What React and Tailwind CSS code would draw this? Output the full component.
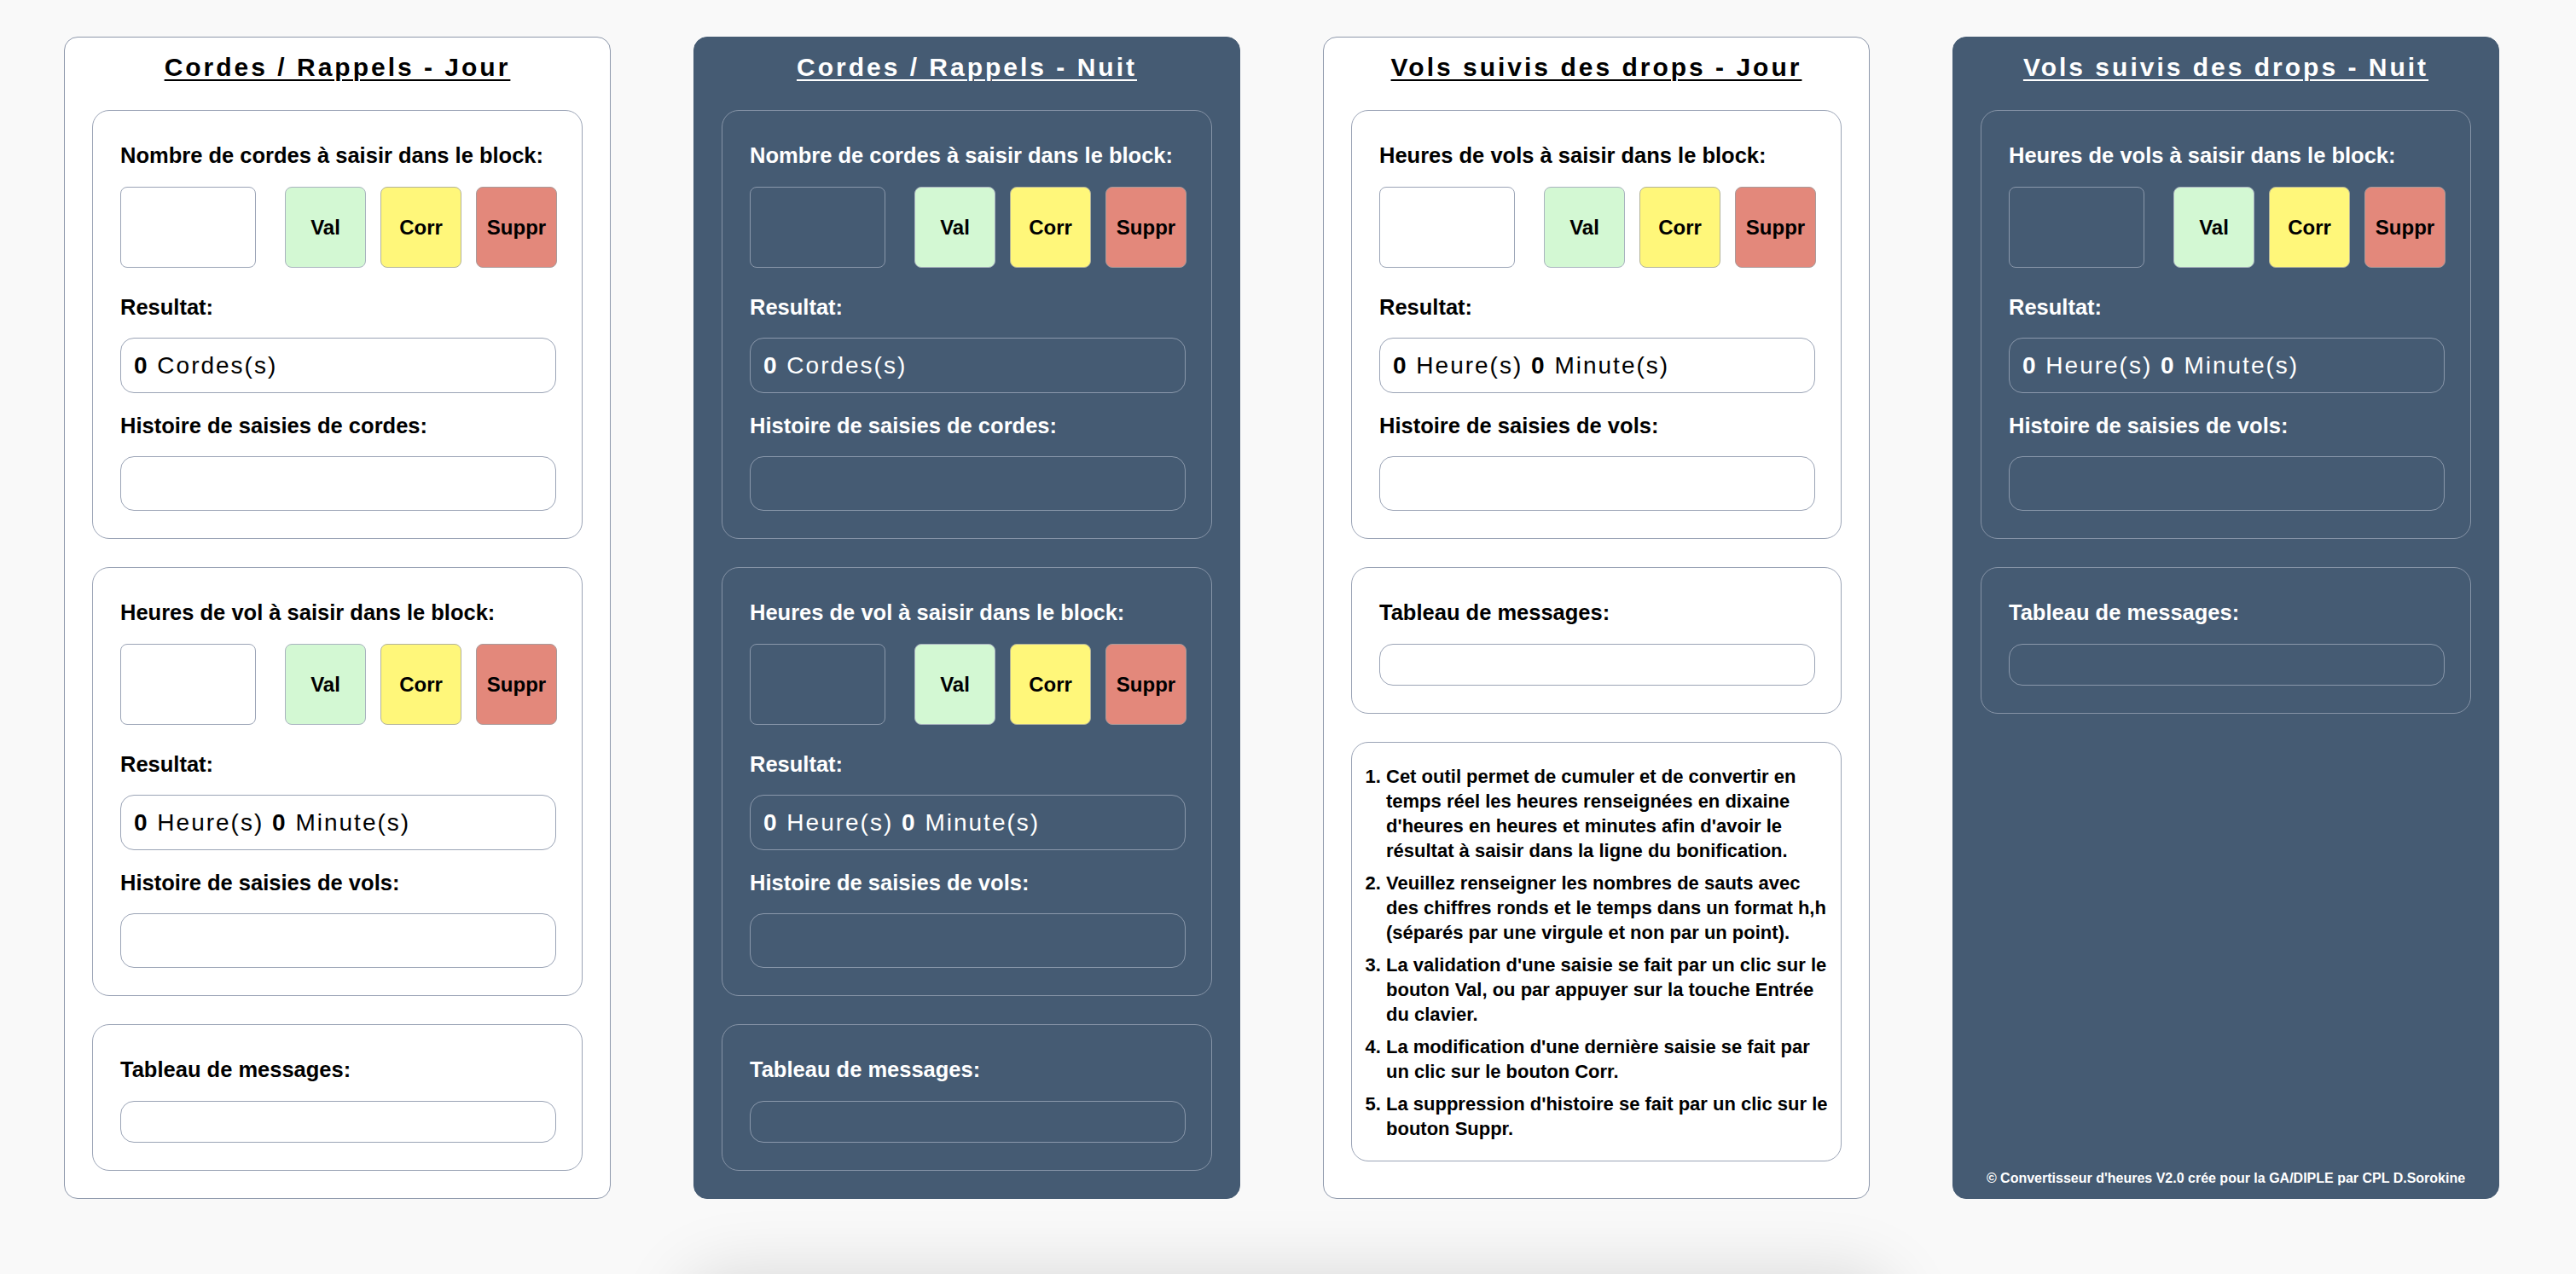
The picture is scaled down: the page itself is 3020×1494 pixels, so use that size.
import React from "react";

const C = {
  day: {
    panel: "bg-white border-[#8e98ab] text-black",
    section: "border-[#9ba4b6]",
    box: "border-[#9ba4b6] bg-white",
    title: "decoration-black",
  },
  night: {
    panel: "bg-[#455b73] border-[#455b73] text-white",
    section: "border-[#8593a6]",
    box: "border-[#8a98ab] bg-transparent",
    title: "decoration-white",
  },
};

function Label({ children, className = "" }) {
  return (
    <div className={"text-[25.5px] font-bold leading-[30px] " + className}>
      {children}
    </div>
  );
}

function Section({ t, children }) {
  return (
    <div className={"rounded-[20px] border pl-[32px] pr-[30px] pt-[37px] pb-[32px] " + t.section}>
      {children}
    </div>
  );
}

function Buttons({ t }) {
  return (
    <div className="mt-[22px] flex h-[95px]">
      <input
        type="text"
        aria-label="saisie"
        className={"mr-[34px] h-[95px] w-[159px] rounded-[8px] border outline-none " + t.box}
      />
      <div className="flex gap-[17px]">
        <button className="flex h-[95px] w-[95px] items-center justify-center rounded-[8px] border border-[#a9b3bf] bg-[#d3f8d3] text-[24px] font-bold text-black">
          Val
        </button>
        <button className="flex h-[95px] w-[95px] items-center justify-center rounded-[8px] border border-[#b3b39a] bg-[#fff77a] text-[24px] font-bold text-black">
          Corr
        </button>
        <button className="flex h-[95px] w-[95px] items-center justify-center rounded-[8px] border border-[#a99a9a] bg-[#e3887b] text-[24px] font-bold text-black">
          Suppr
        </button>
      </div>
    </div>
  );
}

function Saisie({ t, label, result, history }) {
  return (
    <Section t={t}>
      <Label>{label}</Label>
      <Buttons t={t} />
      <Label className="mt-[31px]">Resultat:</Label>
      <div
        className={
          "mt-[21px] flex h-[65px] items-center rounded-[16px] border pl-[15px] text-[28px] tracking-[2px] " +
          t.box
        }
      >
        <span>{result}</span>
      </div>
      <Label className="mt-[23px]">{history}</Label>
      <div className={"mt-[21px] h-[64px] rounded-[16px] border " + t.box}></div>
    </Section>
  );
}

function Messages({ t }) {
  return (
    <Section t={t}>
      <Label>Tableau de messages:</Label>
      <div className={"mt-[22px] h-[49px] rounded-[16px] border " + t.box}></div>
    </Section>
  );
}

function Panel({ t, title, children, pb = "pb-[32px]" }) {
  return (
    <div
      className={
        "flex w-[641px] shrink-0 flex-col gap-[33px] rounded-[16px] border px-[32px] pt-[17px] " +
        pb +
        " " +
        t.panel
      }
    >
      <h2
        className={
          "-mb-[1px] text-center text-[30px] font-bold leading-[36px] tracking-[3px] underline decoration-[2px] underline-offset-[4px] " +
          t.title
        }
      >
        {title}
      </h2>
      {children}
    </div>
  );
}

const cordes = (
  <>
    <b>0</b>{" "}Cordes(s)
  </>
);
const heures = (
  <>
    <b>0</b>{" "}Heure(s){" "}<b>0</b>{" "}Minute(s)
  </>
);

export default function App() {
  return (
    <div
      className="min-h-screen overflow-hidden bg-[#f9f9f9]"
      style={{ fontFamily: "'Liberation Sans', Arial, Helvetica, sans-serif" }}
    >
      <div className="flex items-stretch gap-[97px] pl-[75px] pt-[43px]">
        <Panel t={C.day} title="Cordes / Rappels - Jour">
          <Saisie
            t={C.day}
            label="Nombre de cordes à saisir dans le block:"
            result={cordes}
            history="Histoire de saisies de cordes:"
          />
          <Saisie
            t={C.day}
            label="Heures de vol à saisir dans le block:"
            result={heures}
            history="Histoire de saisies de vols:"
          />
          <Messages t={C.day} />
        </Panel>

        <Panel t={C.night} title="Cordes / Rappels - Nuit">
          <Saisie
            t={C.night}
            label="Nombre de cordes à saisir dans le block:"
            result={cordes}
            history="Histoire de saisies de cordes:"
          />
          <Saisie
            t={C.night}
            label="Heures de vol à saisir dans le block:"
            result={heures}
            history="Histoire de saisies de vols:"
          />
          <Messages t={C.night} />
        </Panel>

        <Panel t={C.day} title="Vols suivis des drops - Jour">
          <Saisie
            t={C.day}
            label="Heures de vols à saisir dans le block:"
            result={heures}
            history="Histoire de saisies de vols:"
          />
          <Messages t={C.day} />
          <div className="rounded-[20px] border border-[#9ba4b6] pr-[8px] pt-[25px] pb-[23px]">
            <ol className="list-outside list-decimal pl-[40px] text-[22px] font-bold leading-[29px]">
              <li className="mb-[9px]">
                Cet outil permet de cumuler et de convertir en temps réel les heures
                renseignées en dixaine d'heures en heures et minutes afin d'avoir le
                résultat à saisir dans la ligne du bonification.
              </li>
              <li className="mb-[9px]">
                Veuillez renseigner les nombres de sauts avec des chiffres ronds et le
                temps dans un format h,h (séparés par une virgule et non par un point).
              </li>
              <li className="mb-[9px]">
                La validation d'une saisie se fait par un clic sur le bouton Val, ou par
                appuyer sur la touche Entrée du clavier.
              </li>
              <li className="mb-[9px]">
                La modification d'une dernière saisie se fait par un clic sur le bouton
                Corr.
              </li>
              <li>
                La suppression d'histoire se fait par un clic sur le bouton Suppr.
              </li>
            </ol>
          </div>
        </Panel>

        <Panel t={C.night} title="Vols suivis des drops - Nuit" pb="pb-[14px]">
          <Saisie
            t={C.night}
            label="Heures de vols à saisir dans le block:"
            result={heures}
            history="Histoire de saisies de vols:"
          />
          <Messages t={C.night} />
          <div className="mt-auto text-center text-[16px] font-bold leading-[18px] text-white">
            © Convertisseur d'heures V2.0 crée pour la GA/DIPLE par CPL D.Sorokine
          </div>
        </Panel>
      </div>
      <div className="mx-auto mt-[96px] h-[300px] w-[1400px] rounded-[40px] bg-[#f9f9f9] shadow-[0_0_80px_10px_rgba(0,0,0,0.13)]"></div>
    </div>
  );
}
